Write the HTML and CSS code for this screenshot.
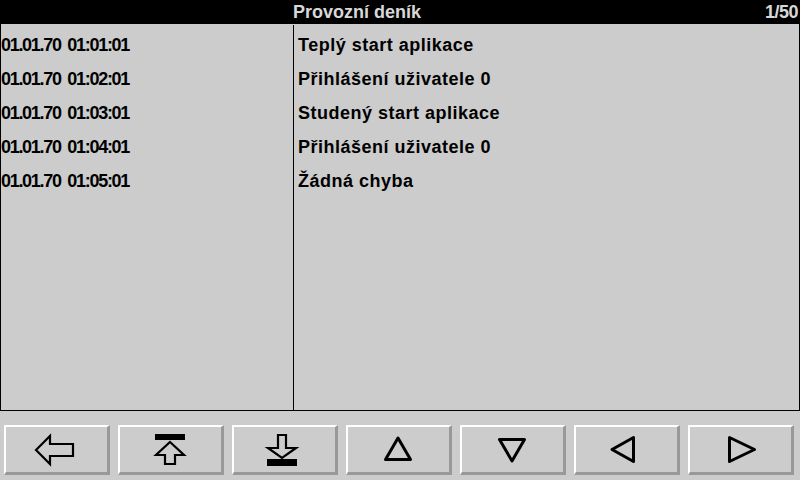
FILE: index.html
```html
<!DOCTYPE html>
<html lang="cs">
<head>
<meta charset="utf-8">
<title>Provozní deník</title>
<link rel="stylesheet" href="styles.css">
</head>
<body>
<div class="screen">
  <header class="topbar">
    <div class="title">Provozní deník</div>
    <div class="page">1/50</div>
  </header>
  <main class="log">
    <div class="col col-time">
      <div class="row">01.01.70 01:01:01</div>
      <div class="row">01.01.70 01:02:01</div>
      <div class="row">01.01.70 01:03:01</div>
      <div class="row">01.01.70 01:04:01</div>
      <div class="row">01.01.70 01:05:01</div>
    </div>
    <div class="col col-msg">
      <div class="row">Teplý start aplikace</div>
      <div class="row">Přihlášení uživatele 0</div>
      <div class="row">Studený start aplikace</div>
      <div class="row">Přihlášení uživatele 0</div>
      <div class="row">Žádná chyba</div>
    </div>
  </main>
  <nav class="buttons">
    <button class="btn" aria-label="Zpět">
      <svg viewBox="0 0 101 45" width="101" height="45"><polygon points="30,23 44,9 44,17 67,17 67,29 44,29 44,37" class="ol2"/></svg>
    </button>
    <button class="btn" aria-label="Začátek">
      <svg viewBox="0 0 101 45" width="101" height="45"><rect x="35" y="7" width="30" height="6" class="solid"/><polygon points="50,15 64,28 55,28 55,37 45,37 45,28 36,28" class="ol2"/></svg>
    </button>
    <button class="btn" aria-label="Konec">
      <svg viewBox="0 0 101 45" width="101" height="45"><polygon points="44,8 52,8 52,21 62,21 48,31 34,21 44,21" class="ol2"/><rect x="33" y="32" width="30" height="7" class="solid"/></svg>
    </button>
    <button class="btn" aria-label="Nahoru">
      <svg viewBox="0 0 101 45" width="101" height="45"><polygon points="50,11 62.5,32.5 37.5,32.5" class="ol3"/></svg>
    </button>
    <button class="btn" aria-label="Dolů">
      <svg viewBox="0 0 101 45" width="101" height="45"><polygon points="37.5,12.5 62.5,12.5 50,34" class="ol3"/></svg>
    </button>
    <button class="btn" aria-label="Vlevo">
      <svg viewBox="0 0 101 45" width="101" height="45"><polygon points="36,22.5 57.5,10.5 57.5,34.5" class="ol3"/></svg>
    </button>
    <button class="btn" aria-label="Vpravo">
      <svg viewBox="0 0 101 45" width="101" height="45"><polygon points="39.5,10.5 64.5,22.5 39.5,34.5" class="ol3"/></svg>
    </button>
  </nav>
</div>
</body>
</html>
```

FILE: styles.css
```css
html, body {
  margin: 0;
  padding: 0;
  background: #cccccc;
}

body {
  width: 800px;
  height: 480px;
  overflow: hidden;
  font-family: "Liberation Sans", Arial, sans-serif;
  font-weight: bold;
  font-size: 18px;
  color: #000;
}

.screen {
  display: flex;
  flex-direction: column;
  width: 800px;
  height: 480px;
}

.topbar {
  height: 24px;
  background: #000;
  color: #d8d8d8;
  display: flex;
  align-items: center;
  line-height: 24px;
}

.title {
  flex: 1;
  padding-left: 293px;
}

.page {
  padding-right: 2px;
  letter-spacing: -0.5px;
}

.log {
  height: 385px;
  border: 1px solid #000;
  border-top: none;
  display: grid;
  grid-template-columns: 293px 1fr;
  padding-top: 1px;
}

.col {
  padding-top: 3px;
}

.col-time {
  border-right: 1px solid #000;
  letter-spacing: -1.3px;
  word-spacing: 3px;
}

.col-msg {
  padding-left: 4px;
  letter-spacing: 0.5px;
}

.row {
  height: 34px;
  line-height: 34px;
  white-space: nowrap;
}

.buttons {
  display: flex;
  gap: 8px;
  padding: 14px 0 0 4px;
}

.btn {
  width: 106px;
  height: 50px;
  padding: 0;
  margin: 0;
  background: #cccccc;
  border-style: solid;
  border-width: 2px 3px 3px 2px;
  border-color: #ffffff #999999 #999999 #ffffff;
  display: block;
}

.btn svg {
  display: block;
}

.ol2 {
  fill: none;
  stroke: #000;
  stroke-width: 2.2;
  stroke-linejoin: miter;
}

.ol3 {
  fill: none;
  stroke: #000;
  stroke-width: 3;
  stroke-linejoin: round;
}

.solid {
  fill: #000;
}
```
